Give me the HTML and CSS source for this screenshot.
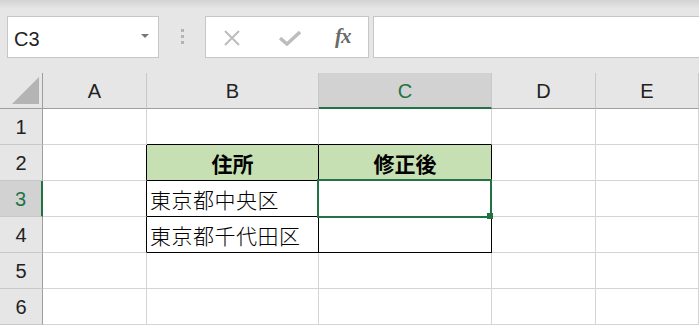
FILE: index.html
```html
<!DOCTYPE html>
<html lang="ja">
<head>
  <meta charset="UTF-8" />
  <title>Excel - 住所</title>
  <link rel="stylesheet" href="styles.css">
</head>
<body>

  <div class="toolbar">
    <div class="name-box">
      <span class="name-text">C3</span>
      <span class="name-arrow"></span>
    </div>
    <div class="grip">
      <span></span><span></span><span></span>
    </div>
    <div class="fx-buttons">
      <svg class="fx-icon" width="18" height="16" viewBox="0 0 18 16">
        <path d="M2 1 L16 15 M16 1 L2 15" stroke="#bdbdbd" stroke-width="2" fill="none"/>
      </svg>
      <svg class="fx-icon" width="22" height="16" viewBox="0 0 22 16">
        <path d="M1 8 L8 14 L21 2" stroke="#bdbdbd" stroke-width="3.5" fill="none"/>
      </svg>
      <span class="fx-label">fx</span>
    </div>
    <div class="formula-input"></div>
  </div>

  <div class="sheet">
    <div class="hd corner"><span class="corner-tri"></span></div>
    <div class="hd col">A</div>
    <div class="hd col">B</div>
    <div class="hd col active-col">C</div>
    <div class="hd col">D</div>
    <div class="hd col">E</div>

    <div class="hd row">1</div>
    <div class="cell"></div>
    <div class="cell edge-b"></div>
    <div class="cell edge-b"></div>
    <div class="cell"></div>
    <div class="cell"></div>

    <div class="hd row">2</div>
    <div class="cell edge-r"></div>
    <div class="cell boxed head">住所</div>
    <div class="cell boxed head">修正後</div>
    <div class="cell"></div>
    <div class="cell"></div>

    <div class="hd row active-row">3</div>
    <div class="cell edge-r"></div>
    <div class="cell boxed text">東京都中央区</div>
    <div class="cell boxed selected"><span class="sel-frame"></span><span class="fill-handle"></span></div>
    <div class="cell"></div>
    <div class="cell"></div>

    <div class="hd row">4</div>
    <div class="cell edge-r"></div>
    <div class="cell boxed text">東京都千代田区</div>
    <div class="cell boxed"></div>
    <div class="cell"></div>
    <div class="cell"></div>

    <div class="hd row">5</div>
    <div class="cell"></div>
    <div class="cell"></div>
    <div class="cell"></div>
    <div class="cell"></div>
    <div class="cell"></div>

    <div class="hd row">6</div>
    <div class="cell"></div>
    <div class="cell"></div>
    <div class="cell"></div>
    <div class="cell"></div>
    <div class="cell"></div>
  </div>

</body>
</html>
```

FILE: styles.css
```css
* {
  margin: 0;
  padding: 0;
  box-sizing: border-box;
}

body {
  width: 699px;
  height: 325px;
  overflow: hidden;
  background: #fff;
  font-family: "Liberation Sans", Arial, sans-serif;
}

/* formula bar */
.toolbar {
  height: 73px;
  display: flex;
  align-items: flex-start;
  padding: 16px 0 0 7px;
  background: linear-gradient(#d3d3d3 0, #dcdcdc 4px, #e6e6e6 9px, #e6e6e6 100%);
}

.name-box {
  width: 152px;
  height: 42px;
  background: #fff;
  border: 1px solid #c6c6c6;
  display: flex;
  align-items: center;
  justify-content: space-between;
  padding: 4px 9px 0 6px;
}

.name-text {
  font-size: 20px;
  color: #222;
}

.name-arrow {
  width: 0;
  height: 0;
  border-left: 4px solid transparent;
  border-right: 4px solid transparent;
  border-top: 4px solid #777;
  margin-bottom: 6px;
}

.grip {
  width: 46px;
  height: 42px;
  display: flex;
  flex-direction: column;
  align-items: center;
  gap: 3px;
  padding-top: 13px;
}

.grip span {
  width: 3px;
  height: 3px;
  background: #b4b4b4;
}

.fx-buttons {
  width: 164px;
  height: 42px;
  background: #fff;
  border: 1px solid #c6c6c6;
  display: flex;
  align-items: center;
  padding: 1px 0 0 17px;
}

.fx-icon:first-child {
  margin-right: 38px;
}

.fx-label {
  margin-left: 34px;
  font-family: "Liberation Serif", "DejaVu Serif", serif;
  font-style: italic;
  font-weight: bold;
  font-size: 21px;
  color: #6a6a6a;
  letter-spacing: -1px;
  margin-top: -3px;
}

.formula-input {
  flex: 1;
  height: 42px;
  margin-left: 4px;
  margin-right: -4px;
  background: #fff;
  border: 1px solid #c6c6c6;
}

/* sheet grid */
.sheet {
  display: grid;
  grid-template-columns: 43px 104px 172px 173px 104px 1fr;
  grid-template-rows: 36px;
  grid-auto-rows: 36px;
}

.cell {
  border-right: 1px solid #d4d4d4;
  border-bottom: 1px solid #d4d4d4;
  font-family: "Noto Sans CJK JP", "Noto Sans", sans-serif;
  font-size: 21px;
  font-weight: 300;
  color: #000;
  display: flex;
  align-items: center;
}

.hd {
  background: #e6e6e6;
  display: flex;
  align-items: center;
  justify-content: center;
  font-size: 20px;
  color: #222;
}

.col {
  border-right: 1px solid #c8c8c8;
  border-bottom: 1px solid #9e9e9e;
  padding-top: 2px;
}

.row {
  border-right: 1px solid #9e9e9e;
  border-bottom: 1px solid #c8c8c8;
  padding-top: 1px;
}

.corner {
  border-right: 1px solid #9e9e9e;
  border-bottom: 1px solid #9e9e9e;
  position: relative;
}

.corner-tri {
  position: absolute;
  left: 12px;
  bottom: 4px;
  width: 0;
  height: 0;
  border-left: 27px solid transparent;
  border-bottom: 27px solid #b4b4b4;
}

.active-col {
  background: #d2d2d2;
  color: #217346;
  border-bottom: 2px solid #217346;
  padding-top: 3px;
}

.active-row {
  background: #d2d2d2;
  color: #217346;
  border-right: 2px solid #217346;
}

/* bordered table B2:C4 */
.edge-b {
  border-bottom-color: #000;
}

.edge-r {
  border-right-color: #000;
}

.boxed {
  border-right-color: #000;
  border-bottom-color: #000;
}

.head {
  background: #c6e0b4;
  justify-content: center;
  font-weight: bold;
}

.text {
  padding-left: 3px;
  letter-spacing: 0.5px;
}

.selected {
  position: relative;
}

.sel-frame {
  position: absolute;
  left: -2px;
  top: -2px;
  right: -1px;
  bottom: -2px;
  border: 2px solid #217346;
}

.fill-handle {
  position: absolute;
  right: -2px;
  bottom: -3px;
  width: 6px;
  height: 6px;
  background: #217346;
}
```
